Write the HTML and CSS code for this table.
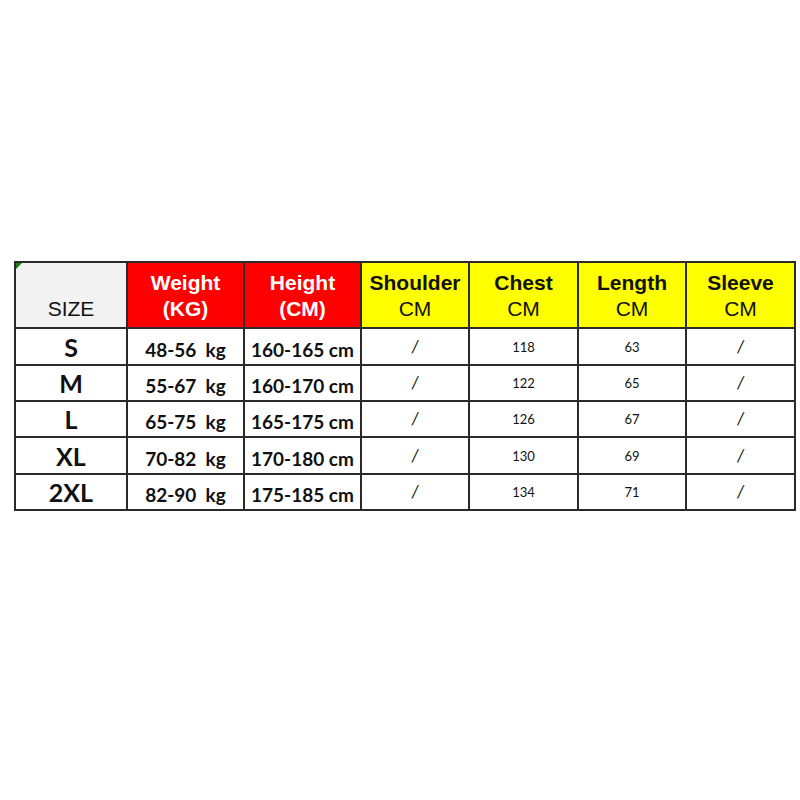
FILE: index.html
```html
<!DOCTYPE html>
<html>
<head>
<meta charset="utf-8">
<link rel="stylesheet" href="styles.css">
</head>
<body>
<div class="page">
  <table class="chart">
    <colgroup>
      <col class="c1"><col class="c2"><col class="c3"><col class="c4"><col class="c5"><col class="c6"><col class="c7">
    </colgroup>
    <thead>
      <tr class="head">
        <th class="size-h"><span class="mark"></span>SIZE</th>
        <th class="red"><b>Weight</b><br><b>(KG)</b></th>
        <th class="red"><b>Height</b><br><b>(CM)</b></th>
        <th class="yellow"><b>Shoulder</b><br>CM</th>
        <th class="yellow"><b>Chest</b><br>CM</th>
        <th class="yellow"><b>Length</b><br>CM</th>
        <th class="yellow"><b>Sleeve</b><br>CM</th>
      </tr>
    </thead>
    <tbody>
      <tr class="r1"><td class="sz">S</td><td class="bd">48-56  kg</td><td class="bd">160-165 cm</td><td class="sl">/</td><td class="num">118</td><td class="num">63</td><td class="sl">/</td></tr>
      <tr class="r2"><td class="sz">M</td><td class="bd">55-67  kg</td><td class="bd">160-170 cm</td><td class="sl">/</td><td class="num">122</td><td class="num">65</td><td class="sl">/</td></tr>
      <tr class="r3"><td class="sz">L</td><td class="bd">65-75  kg</td><td class="bd">165-175 cm</td><td class="sl">/</td><td class="num">126</td><td class="num">67</td><td class="sl">/</td></tr>
      <tr class="r4"><td class="sz">XL</td><td class="bd">70-82  kg</td><td class="bd">170-180 cm</td><td class="sl">/</td><td class="num">130</td><td class="num">69</td><td class="sl">/</td></tr>
      <tr class="r5"><td class="sz">2XL</td><td class="bd">82-90  kg</td><td class="bd">175-185 cm</td><td class="sl">/</td><td class="num">134</td><td class="num">71</td><td class="sl">/</td></tr>
    </tbody>
  </table>
</div>
</body>
</html>
```
FILE: styles.css
```css
html, body {
  margin: 0;
  padding: 0;
  background: #ffffff;
}
.page {
  padding: 261px 0 0 14px;
}
.chart {
  border-collapse: collapse;
  table-layout: fixed;
  width: 780px;
  color: #111;
}
.c1 { width: 112px; }
.c2 { width: 117px; }
.c3 { width: 117px; }
.c4 { width: 108px; }
.c5 { width: 109px; }
.c6 { width: 108px; }
.c7 { width: 109px; }

.chart th, .chart td {
  border: 2px solid #2a2a2a;
  padding: 0;
  text-align: center;
}
.head { height: 66px; }
.chart th {
  font-family: "Liberation Sans", Arial, sans-serif;
  font-size: 21px;
  font-weight: normal;
  line-height: 26px;
  vertical-align: bottom;
  padding-bottom: 5px;
  color: #111;
}
.chart th b { font-weight: bold; }
.size-h {
  background: #f2f2f2;
  position: relative;
}
.mark {
  position: absolute;
  left: 0;
  top: 0;
  width: 0;
  height: 0;
  border-top: 6px solid #1e7b1e;
  border-right: 6px solid transparent;
}
.chart th.red {
  background: #ff0000;
  color: #ffffff;
}
.yellow {
  background: #ffff00;
}

.r2, .r3, .r5 { height: 36px; }
.r1, .r4 { height: 37px; }

.sz {
  font-family: Lato, "Open Sans", sans-serif;
  font-weight: 700;
  font-size: 25px;
  line-height: 28px;
  vertical-align: bottom;
  padding-bottom: 3px !important;
}
.bd {
  font-family: Lato, "Open Sans", sans-serif;
  font-weight: 700;
  font-size: 19px;
  line-height: 22px;
  vertical-align: bottom;
  white-space: pre;
  padding-bottom: 3px !important;
}
.num {
  font-family: Lato, "Open Sans", sans-serif;
  font-size: 13px;
  line-height: 16px;
  vertical-align: middle;
}
.sl {
  font-family: Lato, "Open Sans", sans-serif;
  font-size: 17px;
  font-style: italic;
  line-height: 18px;
  vertical-align: middle;
}
```
